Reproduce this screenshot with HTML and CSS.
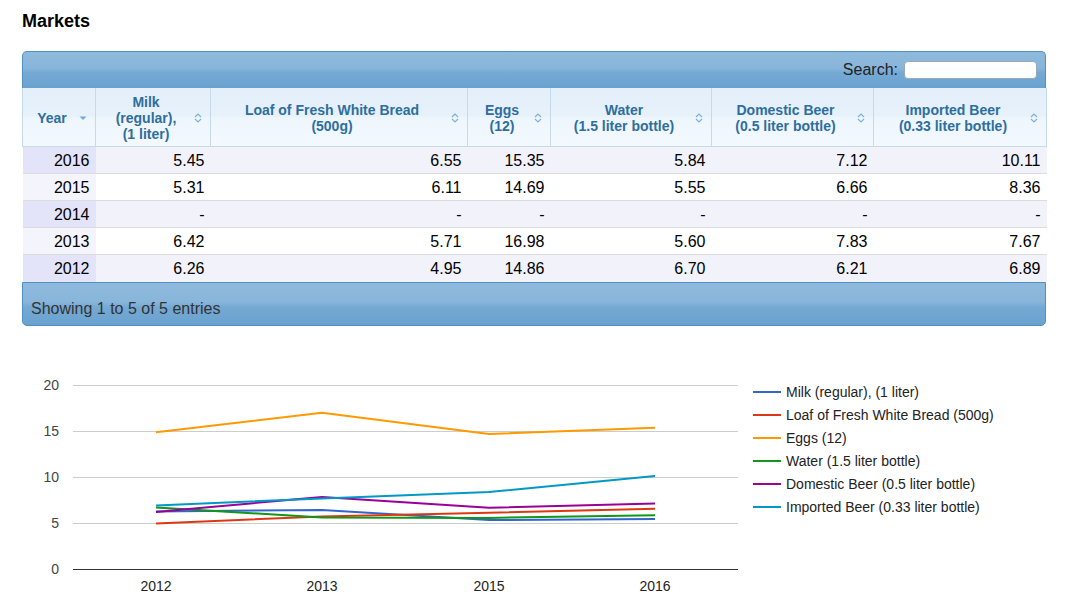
FILE: index.html
```html
<!DOCTYPE html>
<html lang="en">
<head>
<meta charset="utf-8">
<title>Markets</title>
<link rel="stylesheet" href="styles.css">
</head>
<body>
<div class="page">
  <h1 class="title">Markets</h1>
  <div class="dt">
    <div class="dt-toolbar">
      <label class="search">Search: <input type="text" class="search-input"></label>
    </div>
    <table class="dt-table">
      <colgroup>
        <col style="width:73px"><col style="width:115px"><col style="width:257px"><col style="width:83px"><col style="width:161px"><col style="width:162px"><col style="width:173px">
      </colgroup>
      <thead>
        <tr>
          <th><div class="th-in"><span class="th-label">Year</span><svg class="sort" width="8" height="10" viewBox="0 0 8 10"><polygon points="0.5,3.5 7.5,3.5 4,7" fill="#79a8d4"/></svg></div></th>
          <th><div class="th-in"><span class="th-label">Milk<br>(regular),<br>(1 liter)</span><svg class="sort" width="8" height="10" viewBox="0 0 8 10"><polyline points="1,4 4,1 7,4" /><polyline points="1,6 4,9 7,6" /></svg></div></th>
          <th><div class="th-in"><span class="th-label">Loaf of Fresh White Bread<br>(500g)</span><svg class="sort" width="8" height="10" viewBox="0 0 8 10"><polyline points="1,4 4,1 7,4" /><polyline points="1,6 4,9 7,6" /></svg></div></th>
          <th><div class="th-in"><span class="th-label">Eggs<br>(12)</span><svg class="sort" width="8" height="10" viewBox="0 0 8 10"><polyline points="1,4 4,1 7,4" /><polyline points="1,6 4,9 7,6" /></svg></div></th>
          <th><div class="th-in"><span class="th-label">Water<br>(1.5 liter bottle)</span><svg class="sort" width="8" height="10" viewBox="0 0 8 10"><polyline points="1,4 4,1 7,4" /><polyline points="1,6 4,9 7,6" /></svg></div></th>
          <th><div class="th-in"><span class="th-label">Domestic Beer<br>(0.5 liter bottle)</span><svg class="sort" width="8" height="10" viewBox="0 0 8 10"><polyline points="1,4 4,1 7,4" /><polyline points="1,6 4,9 7,6" /></svg></div></th>
          <th><div class="th-in"><span class="th-label">Imported Beer<br>(0.33 liter bottle)</span><svg class="sort" width="8" height="10" viewBox="0 0 8 10"><polyline points="1,4 4,1 7,4" /><polyline points="1,6 4,9 7,6" /></svg></div></th>
        </tr>
      </thead>
      <tbody>
        <tr class="odd"><td class="sorted">2016</td><td>5.45</td><td>6.55</td><td>15.35</td><td>5.84</td><td>7.12</td><td>10.11</td></tr>
        <tr class="even"><td class="sorted">2015</td><td>5.31</td><td>6.11</td><td>14.69</td><td>5.55</td><td>6.66</td><td>8.36</td></tr>
        <tr class="odd"><td class="sorted">2014</td><td>-</td><td>-</td><td>-</td><td>-</td><td>-</td><td>-</td></tr>
        <tr class="even"><td class="sorted">2013</td><td>6.42</td><td>5.71</td><td>16.98</td><td>5.60</td><td>7.83</td><td>7.67</td></tr>
        <tr class="odd"><td class="sorted">2012</td><td>6.26</td><td>4.95</td><td>14.86</td><td>6.70</td><td>6.21</td><td>6.89</td></tr>
      </tbody>
    </table>
    <div class="dt-footer">Showing 1 to 5 of 5 entries</div>
  </div>
</div>

<svg class="chart" width="1070" height="280" viewBox="0 336 1070 280" xmlns="http://www.w3.org/2000/svg">
  <g class="grid">
    <line x1="73" y1="385.5" x2="738" y2="385.5"/>
    <line x1="73" y1="431.5" x2="738" y2="431.5"/>
    <line x1="73" y1="477.5" x2="738" y2="477.5"/>
    <line x1="73" y1="523.5" x2="738" y2="523.5"/>
  </g>
  <line class="baseline" x1="73" y1="569.5" x2="738" y2="569.5"/>
  <g class="ylabels">
    <text x="59" y="390">20</text>
    <text x="59" y="436">15</text>
    <text x="59" y="482">10</text>
    <text x="59" y="528">5</text>
    <text x="59" y="574">0</text>
  </g>
  <g class="xlabels">
    <text x="156" y="591">2012</text>
    <text x="322" y="591">2013</text>
    <text x="489" y="591">2015</text>
    <text x="655" y="591">2016</text>
  </g>
  <g class="series">
    <polyline stroke="#3366cc" points="156,511.4 322,509.9 489,520.1 655,518.9"/>
    <polyline stroke="#dc3912" points="156,523.5 322,516.5 489,512.8 655,508.7"/>
    <polyline stroke="#ff9900" points="156,432.3 322,412.8 489,433.9 655,427.8"/>
    <polyline stroke="#109618" points="156,507.4 322,517.5 489,517.9 655,515.3"/>
    <polyline stroke="#990099" points="156,511.9 322,497.0 489,507.7 655,503.5"/>
    <polyline stroke="#0099c6" points="156,505.6 322,498.4 489,492.1 655,476.0"/>
  </g>
  <g class="legend">
    <line stroke="#3366cc" x1="753" y1="392" x2="781" y2="392"/>
    <text x="786" y="397">Milk (regular), (1 liter)</text>
    <line stroke="#dc3912" x1="753" y1="415" x2="781" y2="415"/>
    <text x="786" y="420">Loaf of Fresh White Bread (500g)</text>
    <line stroke="#ff9900" x1="753" y1="438" x2="781" y2="438"/>
    <text x="786" y="443">Eggs (12)</text>
    <line stroke="#109618" x1="753" y1="461" x2="781" y2="461"/>
    <text x="786" y="466">Water (1.5 liter bottle)</text>
    <line stroke="#990099" x1="753" y1="484" x2="781" y2="484"/>
    <text x="786" y="489">Domestic Beer (0.5 liter bottle)</text>
    <line stroke="#0099c6" x1="753" y1="507" x2="781" y2="507"/>
    <text x="786" y="512">Imported Beer (0.33 liter bottle)</text>
  </g>
</svg>
</body>
</html>
```

FILE: styles.css
```css
html, body {
  margin: 0;
  padding: 0;
  background: #ffffff;
}

body {
  font-family: "Liberation Sans", Arial, Helvetica, sans-serif;
  color: #000;
  overflow: hidden;
}

.page {
  padding: 10px 0 0 22px;
}

.title {
  margin: 0 0 19px;
  font-size: 18px;
  line-height: 22px;
  font-weight: bold;
  color: #000;
}

.dt {
  width: 1024px;
}

.dt-toolbar {
  box-sizing: border-box;
  height: 37px;
  border: 1px solid #4f8fc7;
  border-bottom: none;
  border-radius: 5px 5px 0 0;
  background: linear-gradient(to bottom, #8fbadd 0%, #88b5da 45%, #74a9d3 58%, #6aa2cf 100%);
  display: flex;
  justify-content: flex-end;
  align-items: center;
  padding: 0 8px 0 0;
}

.search {
  display: flex;
  align-items: center;
  font-size: 16px;
  color: #222;
}

.search-input {
  box-sizing: border-box;
  width: 133px;
  height: 18px;
  margin: 0 0 0 6px;
  padding: 0 4px;
  border: 1px solid #9aa9b8;
  border-radius: 4px;
  background: #fff;
  font: inherit;
}

.dt-table {
  width: 1024px;
  table-layout: fixed;
  border-collapse: collapse;
  border-spacing: 0;
}

.dt-table thead th {
  height: 58px;
  padding: 0;
  border-left: 1px solid #c5dbec;
  border-right: 1px solid #c5dbec;
  border-bottom: 1px solid #c5dbec;
  background: linear-gradient(to bottom, #e3eff9 0%, #e6f1fa 48%, #eef6fd 52%, #f2f8fe 100%);
  font-size: 14px;
  line-height: 16px;
  font-weight: bold;
  color: #2e6e9e;
}

.th-in {
  display: flex;
  align-items: center;
  padding: 2px 8px 0 2px;
}

.th-label {
  flex: 1;
  text-align: center;
}

.sort {
  flex: none;
  display: block;
}

.sort polyline {
  fill: none;
  stroke: #7db0da;
  stroke-width: 1.2;
}

.dt-table tbody td {
  padding: 2px 6px 0;
  line-height: 24px;
  text-align: right;
  font-size: 16px;
  color: #000;
  border-bottom: 1px solid #dcdcdc;
  white-space: nowrap;
}

.dt-table tbody tr:last-child td {
  border-bottom: none;
  padding-bottom: 1px;
}

.dt-table tr.odd td {
  background: #f2f2fb;
}

.dt-table tr.odd td.sorted {
  background: #e3e4fa;
}

.dt-table tr.even td {
  background: #ffffff;
}

.dt-table tr.even td.sorted {
  background: #f4f4fd;
}

.dt-footer {
  box-sizing: border-box;
  height: 44px;
  border: 1px solid #4f8fc7;
  border-radius: 0 0 5px 5px;
  background: linear-gradient(to bottom, #8fbadd 0%, #88b5da 45%, #74a9d3 58%, #6aa2cf 100%);
  padding: 15px 0 0 8px;
  font-size: 16px;
  line-height: 22px;
  color: #333;
}

.chart {
  display: block;
  margin-top: 10px;
}

.chart .grid line {
  stroke: #cccccc;
  stroke-width: 1;
}

.chart .baseline {
  stroke: #333333;
  stroke-width: 1;
}

.chart text {
  font-family: "Liberation Sans", Arial, sans-serif;
  font-size: 14px;
  fill: #222;
}

.chart .ylabels text {
  text-anchor: end;
  fill: #444;
}

.chart .xlabels text {
  text-anchor: middle;
}

.chart .series polyline {
  fill: none;
  stroke-width: 2;
  stroke-linejoin: round;
}

.chart .legend line {
  stroke-width: 2;
}
```
